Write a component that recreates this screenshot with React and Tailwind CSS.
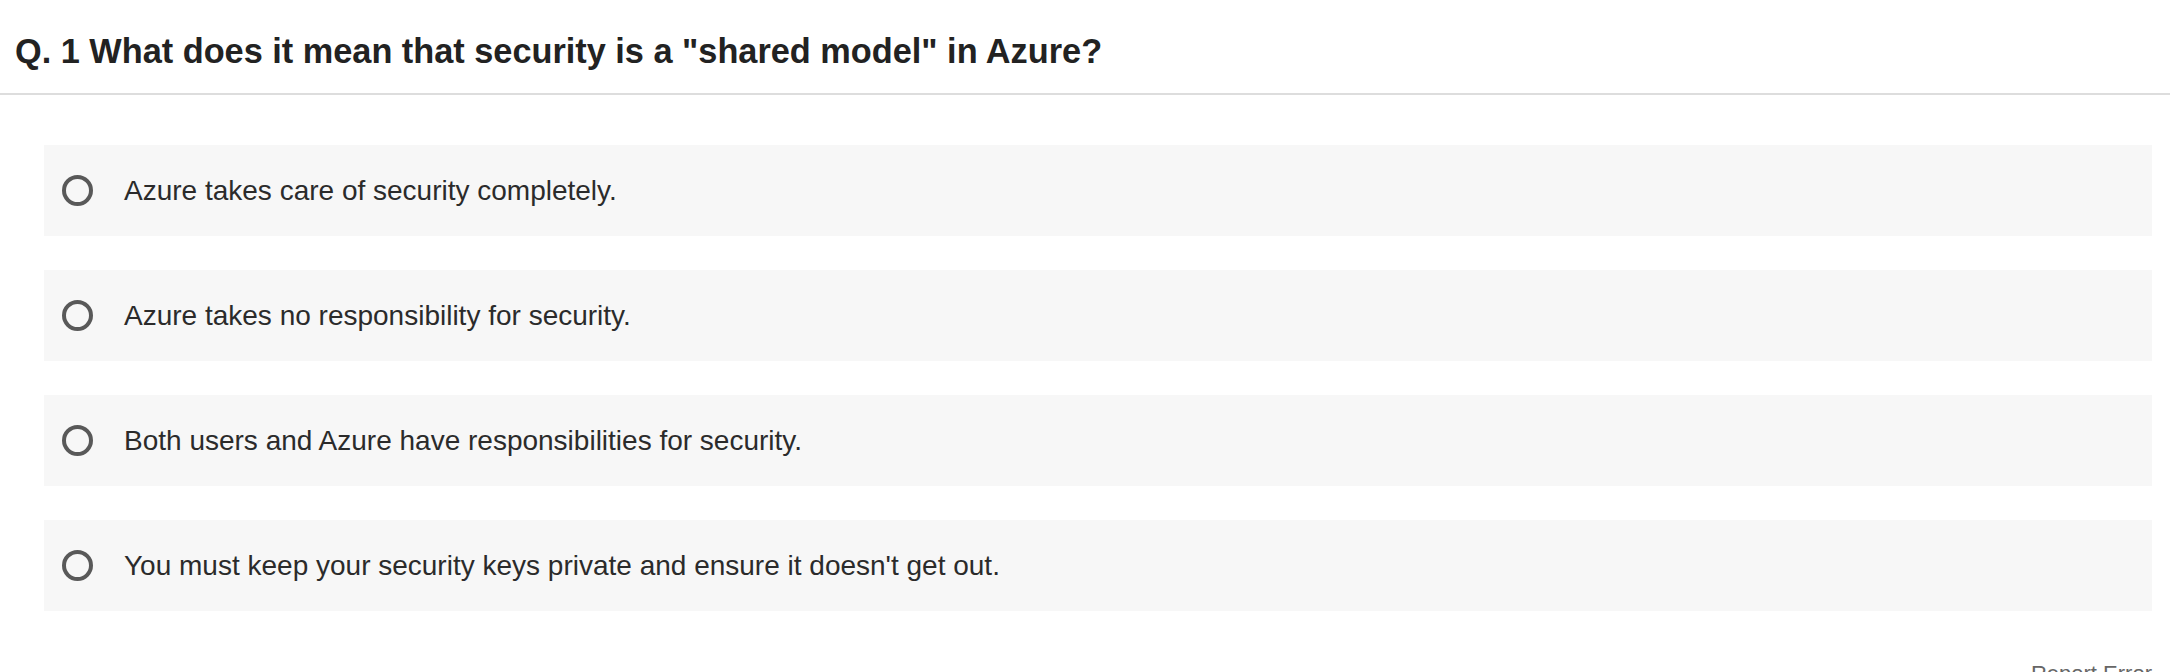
const options = [
  "Azure takes care of security completely.",
  "Azure takes no responsibility for security.",
  "Both users and Azure have responsibilities for security.",
  "You must keep your security keys private and ensure it doesn't get out.",
];

export default function App() {
  return (
    <div className="min-h-screen bg-white font-['Liberation_Sans',Arial,sans-serif] text-[#222]">
      <div className="border-b-2 border-[#dddddd] pl-[15px] pt-[32px] pb-[22px]">
        <h1 className="text-[34.3px] leading-[39px] font-bold text-[#222]">
          Q. 1 What does it mean that security is a "shared model" in Azure?
        </h1>
      </div>

      <div className="pl-[44px] pr-[18px] pt-[50px]">
        <div className="flex flex-col gap-[34px]">
          {options.map((opt) => (
            <label
              key={opt}
              className="flex h-[91px] items-center bg-[#f7f7f7] pl-[18px] cursor-pointer"
            >
              <span className="h-[31px] w-[31px] shrink-0 rounded-full border-4 border-[#595959]" />
              <span className="ml-[31px] text-[28px] leading-[32px] text-[#2b2b2b]">
                {opt}
              </span>
            </label>
          ))}
        </div>

        <div className="mt-[50px] flex justify-end">
          <span className="text-[22px] leading-[25px] text-[#666]">Report Error</span>
        </div>
      </div>
    </div>
  );
}
